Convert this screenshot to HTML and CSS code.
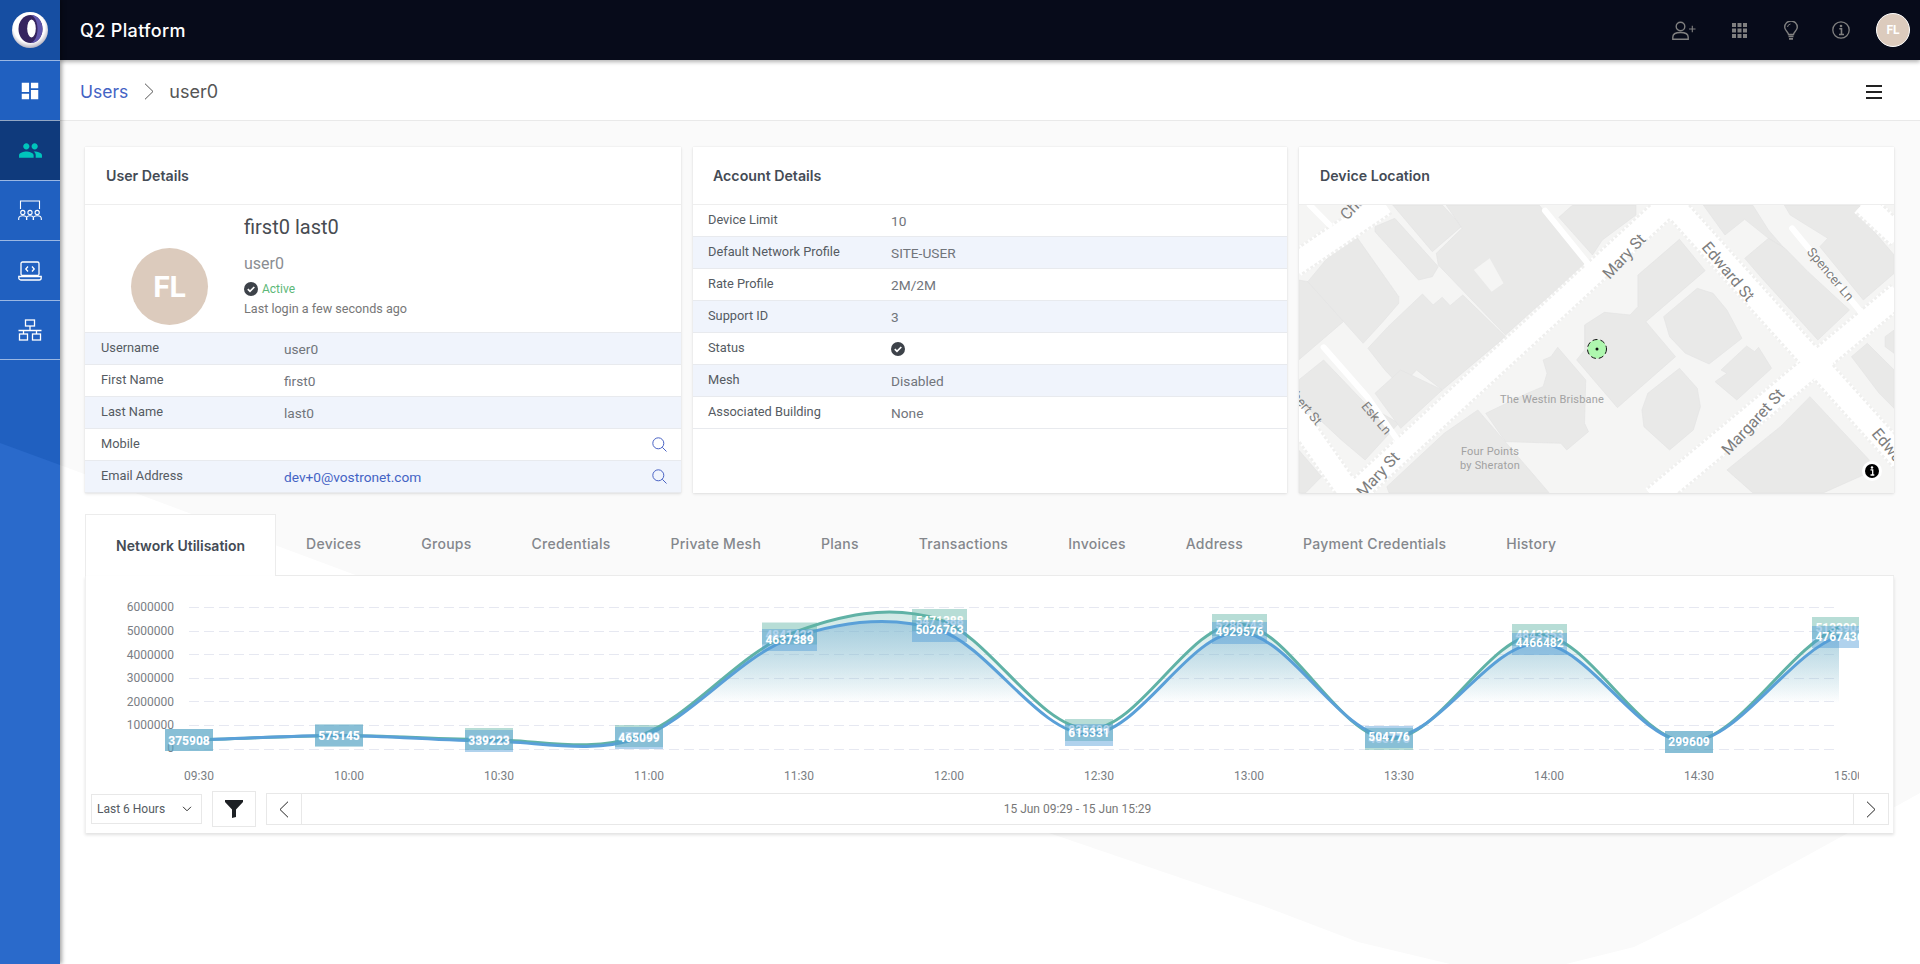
FILE: index.html
```html
<!DOCTYPE html>
<html lang="en">
<head>
<meta charset="utf-8">
<title>Q2 Platform</title>
<link rel="stylesheet" href="styles.css">
</head>
<body>
<div class="app">
  <aside class="sidebar">
    <div class="logo">
      <svg width="60" height="60" viewBox="0 0 60 60">
        <defs><radialGradient id="sphere" cx="48%" cy="42%" r="60%"><stop offset="72%" stop-color="#fff"/><stop offset="100%" stop-color="#a9a6b6"/></radialGradient></defs>
        <circle cx="30" cy="30" r="18" fill="url(#sphere)"/>
        <ellipse cx="30.500" cy="29" rx="12" ry="14" fill="#35245f"/>
        <path d="M31 15c6.500 0 11.500 6 11.500 14S37.500 43 31 43c4-2 6.500-7 6.500-14S35 17 31 15z" fill="#5f55ab"/>
        <ellipse cx="31.500" cy="28.500" rx="4.300" ry="9" fill="#fff"/>
      </svg>
    </div>
    <a class="nav-item">
      <svg width="22" height="22" viewBox="0 0 24 24" fill="#fff"><path d="M3 13h8V3H3v10zm0 8h8v-6H3v6zm10 0h8V11h-8v10zm0-18v6h8V3h-8z"/></svg>
    </a>
    <a class="nav-item nav-active">
      <svg width="25" height="25" viewBox="0 0 24 24" fill="#00c4bc"><path d="M16 11c1.660 0 2.990-1.340 2.990-3S17.660 5 16 5c-1.660 0-3 1.340-3 3s1.340 3 3 3zm-8 0c1.660 0 2.990-1.340 2.990-3S9.660 5 8 5C6.340 5 5 6.340 5 8s1.340 3 3 3zm0 2c-2.330 0-7 1.170-7 3.500V19h14v-2.500c0-2.330-4.670-3.500-7-3.500zm8 0c-.290 0-.620.020-.970.050 1.160.840 1.970 1.970 1.970 3.450V19h6v-2.500c0-2.330-4.670-3.500-7-3.500z"/></svg>
    </a>
    <a class="nav-item">
      <svg width="24" height="22" viewBox="0 0 24 22" fill="none" stroke="#fff" stroke-width="1.100"><path d="M2.500 9V1h19v8"/><circle cx="4.800" cy="12.500" r="2.100"/><circle cx="12" cy="12.500" r="2.100"/><circle cx="19.200" cy="12.500" r="2.100"/><path d="M.7 20v-1.500c0-2 2-2.800 4.100-2.800s4 .8 4 2.800V20M8.500 20v-1.500c0-2 1.600-2.800 3.500-2.800s3.500.8 3.500 2.800V20M15.200 20v-1.500c0-2 2-2.800 4-2.800s4.100.8 4.100 2.800V20"/></svg>
    </a>
    <a class="nav-item">
      <svg width="24" height="20" viewBox="0 0 24 20" fill="none" stroke="#fff" stroke-width="1.300"><rect x="3" y="1" width="18" height="13.500" rx="1.500"/><path d="M.8 15.500h22.400v1.500a2 2 0 0 1-2 2H2.800a2 2 0 0 1-2-2z"/><path d="M10 5.500 7.800 8l2.200 2.500M14 5.500 16.200 8 14 10.500"/></svg>
    </a>
    <a class="nav-item">
      <svg width="24" height="22" viewBox="0 0 24 22" fill="none" stroke="#fff" stroke-width="1.300"><rect x="7.500" y="1" width="9" height="6"/><path d="M12 7v4.500M.5 11.500h23M5.500 11.500V15M18.500 11.500V15"/><rect x="1.500" y="15" width="8" height="6"/><rect x="14.500" y="15" width="8" height="6"/></svg>
    </a>
  </aside>

  <div class="main">
    <header class="topbar">
      <div class="brand">Q2 Platform</div>
      <div class="top-actions">
        <svg class="ti-person" width="24" height="19" viewBox="0 0 24 19" fill="none" stroke="#808080" stroke-width="1.400"><circle cx="8.500" cy="5.500" r="4.300"/><path d="M.8 18.200v-2c0-3 3.200-4.700 7.700-4.700s7.700 1.700 7.700 4.700v2z"/><path d="M17 8h6.500M20.300 4.800v6.500" stroke-width="1.100"/></svg>
        <svg class="ti-grid" width="15" height="15" viewBox="0 0 15 15" fill="#808080"><rect width="4" height="4"/><rect x="5.500" width="4" height="4"/><rect x="11" width="4" height="4"/><rect y="5.500" width="4" height="4"/><rect x="5.500" y="5.500" width="4" height="4"/><rect x="11" y="5.500" width="4" height="4"/><rect y="11" width="4" height="4"/><rect x="5.500" y="11" width="4" height="4"/><rect x="11" y="11" width="4" height="4"/></svg>
        <svg class="ti-bulb" width="14" height="19" viewBox="0 0 14 19" fill="none" stroke="#808080" stroke-width="1.400"><path d="M4.500 13.500c0-2.500-3.800-3.800-3.800-7.200a6.300 6.300 0 0 1 12.600 0c0 3.400-3.800 4.700-3.800 7.200z"/><path d="M4.500 15.300h5M5 17.800h4" stroke-width="1.700"/><path d="M3.500 6a3.500 3.500 0 0 1 3-3" stroke-width="1"/></svg>
        <svg class="ti-info" width="18" height="18" viewBox="0 0 18 18" fill="none" stroke="#808080" stroke-width="1.300"><circle cx="9" cy="9" r="8.200"/><circle cx="9" cy="5" r="1.300" fill="#808080" stroke="none"/><path d="M7.300 7.800H9.500v5.500M7 13.500h5" stroke-width="1.600"/></svg>
        <div class="top-avatar">FL</div>
      </div>
    </header>

    <nav class="crumbs">
      <a class="crumb-link">Users</a>
      <svg class="crumb-sep" width="10" height="17" viewBox="0 0 10 17" fill="none" stroke="#555" stroke-width="1"><path d="M1 .7 9 8.500 1 16.300"/></svg>
      <span class="crumb-cur">user0</span>
      <div class="hamburger"><i></i><i></i><i></i></div>
    </nav>

    <main class="content">
      <section class="cards">
        <article class="card">
          <h2 class="card-title">User Details</h2>
          <div class="profile">
            <div class="avatar">FL</div>
            <div class="profile-text">
              <div class="p-name">first0 last0</div>
              <div class="p-user">user0</div>
              <div class="p-status">
                <svg width="14" height="14" viewBox="0 0 14 14"><circle cx="7" cy="7" r="7" fill="#3d4249"/><path d="M3.800 7.200 6 9.400l4.300-4.400" fill="none" stroke="#fff" stroke-width="1.700"/></svg>
                <span>Active</span>
              </div>
              <div class="p-login">Last login a few seconds ago</div>
            </div>
          </div>
          <div class="row shade"><span class="r-label">Username</span><span class="r-value">user0</span></div>
          <div class="row"><span class="r-label">First Name</span><span class="r-value">first0</span></div>
          <div class="row shade"><span class="r-label">Last Name</span><span class="r-value">last0</span></div>
          <div class="row"><span class="r-label">Mobile</span><span class="r-value"></span>
            <svg class="r-search" width="15" height="15" viewBox="0 0 15 15" fill="none" stroke="#4a63c4" stroke-width="1"><circle cx="6.300" cy="6.300" r="5.500"/><path d="m10.300 10.300 4.200 4.200"/></svg></div>
          <div class="row shade"><span class="r-label">Email Address</span><span class="r-value link">dev+0@vostronet.com</span>
            <svg class="r-search" width="15" height="15" viewBox="0 0 15 15" fill="none" stroke="#4a63c4" stroke-width="1"><circle cx="6.300" cy="6.300" r="5.500"/><path d="m10.300 10.300 4.200 4.200"/></svg></div>
        </article>

        <article class="card card-account">
          <h2 class="card-title">Account Details</h2>
          <div class="row"><span class="r-label">Device Limit</span><span class="r-value">10</span></div>
          <div class="row shade"><span class="r-label">Default Network Profile</span><span class="r-value">SITE-USER</span></div>
          <div class="row"><span class="r-label">Rate Profile</span><span class="r-value">2M/2M</span></div>
          <div class="row shade"><span class="r-label">Support ID</span><span class="r-value">3</span></div>
          <div class="row"><span class="r-label">Status</span><span class="r-value"><svg class="status-ic" width="14" height="14" viewBox="0 0 14 14"><circle cx="7" cy="7" r="7" fill="#3d4249"/><path d="M3.800 7.200 6 9.400l4.300-4.400" fill="none" stroke="#fff" stroke-width="1.700"/></svg></span></div>
          <div class="row shade"><span class="r-label">Mesh</span><span class="r-value">Disabled</span></div>
          <div class="row"><span class="r-label">Associated Building</span><span class="r-value">None</span></div>
        </article>

        <article class="card">
          <h2 class="card-title">Device Location</h2>
          <svg class="map" width="595" height="288" viewBox="1299 205 595 288">
            <rect x="1299" y="205" width="595" height="288" fill="#f5f5f4"/>
            <g transform="translate(1290 140) scale(.3954 .3333)">
              <g class="bld">
                <polygon points="22,420 45,425 135,545 22,660"/>
                <polygon points="45,425 155,268 275,470 275,490 235,545 185,610"/>
                <polygon points="215,260 265,235 375,380 360,410 325,420 215,275"/>
                <polygon points="260,195 385,195 435,258 360,335"/>
                <polygon points="370,340 435,265 395,195 630,195 750,375 620,505 545,585 375,375"/>
                <polygon points="680,232 715,195 875,195 875,225 790,300 765,345"/>
                <polygon points="197,625 248,560 335,462 362,495 385,472 405,497 437,465 545,590 385,750 320,690 280,740 240,690"/>
                <polygon points="22,720 85,660 190,790 275,850 190,960 130,900 22,780"/>
                <polygon points="215,760 280,690 385,750 280,865"/>
                <polygon points="22,930 80,1010 40,1058 22,1058"/>
                <polygon points="745,555 795,517 860,525 880,500 880,405 985,298 1050,392 900,545 975,650 828,803 725,660 745,630"/>
                <polygon points="677,622 748,720 745,850 755,875 700,930 685,910 545,905 495,820 600,760 640,740 650,700 640,660 660,650"/>
                <polygon points="945,530 1030,445 1070,460 1105,510 1143,595 1060,672 1000,640 960,590"/>
                <polygon points="985,685 1030,745 1038,800 1020,870 960,930 895,860 890,810 905,760"/>
                <polygon points="1090,690 1155,618 1175,635 1185,622 1218,685 1130,780 1075,725 1105,700"/>
                <polygon points="1045,195 1170,195 1210,270 1250,325 1210,295 1150,238 1100,285"/>
                <polygon points="1150,355 1210,295 1252,325 1310,395 1415,510 1335,600 1190,410"/>
                <polygon points="1250,195 1440,195 1445,230 1528,345 1528,400 1450,480 1340,320 1360,295 1265,225"/>
                <polygon points="1420,650 1460,610 1528,690 1528,805 1490,760"/>
                <polygon points="1505,590 1528,570 1528,640 1505,620"/>
                <polygon points="1105,990 1240,860 1315,770 1465,960 1460,1000 1350,1058 1170,1058"/>
                <polygon points="245,1040 390,880 475,810 655,1058 250,1058"/>
              </g>
              <polygon class="plaza" points="465,390 505,355 540,430 510,455"/>
              <path class="road-edge" d="M150 1075 960 190M950 170 1560 975M920 1075 1540 462M10 375 240 190M-20 770 150 1058M1450 190 1540 290"/>
              <path class="road-dots" d="M150 1075 960 190M950 170 1560 975M920 1075 1540 462M10 375 240 190M-20 770 150 1058M1450 190 1540 290"/>
              <path class="road" d="M150 1075 960 190M950 170 1560 975M920 1075 1540 462M10 375 240 190M-20 770 150 1058M1450 190 1540 290"/>
              <path class="lane" d="M85 622 195 770 275 905M645 212 770 395M1270 265 1450 525M50 195 100 255"/>
            </g>
            <text class="m-road" transform="translate(1628 260) rotate(-47)">Mary St</text>
            <text class="m-road" transform="translate(1724 275) rotate(50)">Edward St</text>
            <text class="m-road small" transform="translate(1827 277) rotate(50)">Spencer Ln</text>
            <text class="m-road" transform="translate(1757 425.500) rotate(-47)">Margaret St</text>
            <text class="m-road" transform="translate(1382 478) rotate(-47)">Mary St</text>
            <text class="m-road small" transform="translate(1373 421) rotate(50)">Esk Ln</text>
            <text class="m-road anchor-start" transform="translate(1871 434) rotate(50)">Edward St</text>
            <text class="m-road small anchor-end" transform="translate(1316 426) rotate(50)">Albert St</text>
            <text class="m-road anchor-start" transform="translate(1347 221) rotate(-47)">Charlotte St</text>
            <text class="m-poi" x="1552" y="403">The Westin Brisbane</text>
            <text class="m-poi" x="1490" y="455">Four Points</text>
            <text class="m-poi" x="1490" y="469">by Sheraton</text>
            <circle class="m-pin" cx="1597" cy="349" r="9.500"/>
            <circle cx="1597" cy="349" r="1.500" fill="#111"/>
            <circle cx="1872" cy="471" r="10" fill="#fff"/>
            <circle cx="1872" cy="471" r="7" fill="#000"/>
            <circle cx="1872" cy="467.500" r="1.200" fill="#fff"/>
            <path d="M1870.500 469.800h2.200v5M1870.500 475h3.800" stroke="#fff" stroke-width="1.300" fill="none"/>
          </svg>
        </article>
      </section>

      <section class="panel">
        <div class="tabs">
          <a class="tab tab-active">Network Utilisation</a>
          <a class="tab">Devices</a>
          <a class="tab">Groups</a>
          <a class="tab">Credentials</a>
          <a class="tab">Private Mesh</a>
          <a class="tab">Plans</a>
          <a class="tab">Transactions</a>
          <a class="tab">Invoices</a>
          <a class="tab">Address</a>
          <a class="tab">Payment Credentials</a>
          <a class="tab">History</a>
        </div>
        <div class="panel-body">
          <svg class="chart" width="1773" height="215" viewBox="86 577 1773 215">
            <defs>
              <linearGradient id="areaB" gradientUnits="userSpaceOnUse" x1="0" y1="622" x2="0" y2="704"><stop offset="0" stop-color="#7db4d6" stop-opacity=".55"/><stop offset="1" stop-color="#7db4d6" stop-opacity="0"/></linearGradient>
              <linearGradient id="areaG" gradientUnits="userSpaceOnUse" x1="0" y1="612" x2="0" y2="704"><stop offset="0" stop-color="#60b2a6" stop-opacity=".3"/><stop offset="1" stop-color="#60b2a6" stop-opacity="0"/></linearGradient>
            </defs>
            <g class="grid">
              <path d="M189 608.500H1839M189 632.500H1839M189 655.500H1839M189 679.500H1839M189 702.500H1839M189 726.500H1839M189 750.500H1839"/>
            </g>
            <g class="y-axis">
              <text x="174" y="612">6000000</text>
              <text x="174" y="636">5000000</text>
              <text x="174" y="660">4000000</text>
              <text x="174" y="683">3000000</text>
              <text x="174" y="707">2000000</text>
              <text x="174" y="730">1000000</text>
              <text x="174" y="753">0</text>
            </g>
            <g class="x-axis">
              <text x="199" y="781">09:30</text><text x="349" y="781">10:00</text><text x="499" y="781">10:30</text><text x="649" y="781">11:00</text><text x="799" y="781">11:30</text><text x="949" y="781">12:00</text><text x="1099" y="781">12:30</text><text x="1249" y="781">13:00</text><text x="1399" y="781">13:30</text><text x="1549" y="781">14:00</text><text x="1699" y="781">14:30</text><text x="1849" y="781">15:00</text>
            </g>
            <path fill="url(#areaG)" d="M189 741.100C239 740.300,289 736.500,339 736.400C389 736.300,439 740.400,489 740.500C539 740.600,589 754.520,639 737C689 719.480,739 654.820,789 635.400C839 615.980,889 604.720,939 620.500C989 636.280,1039 729.370,1089 730.100C1139 730.830,1189 623.250,1239 624.900C1289 626.550,1339 738.250,1389 740C1439 741.750,1489 634.920,1539 635.400C1589 635.880,1639 744.050,1689 742.900C1739 741.750,1789 647.500,1839 628.500V750H189Z"/>
            <path fill="url(#areaB)" d="M189 741.100C239 740.300,289 736.250,339 736.400C389 736.550,439 741.570,489 742C539 742.430,589 755.970,639 739C689 722.030,739 658.200,789 640.200C839 622.200,889 615.130,939 631C989 646.870,1039 735.020,1089 735.400C1139 735.780,1189 632.850,1239 633.300C1289 633.750,1339 736.270,1389 738.100C1439 739.930,1489 643.500,1539 644.300C1589 645.100,1639 744.080,1689 742.900C1739 741.720,1789 654,1839 637.200V750H189Z"/>
            <path class="line-g" d="M189 741.100C239 740.300,289 736.500,339 736.400C389 736.300,439 740.400,489 740.500C539 740.600,589 754.520,639 737C689 719.480,739 654.820,789 635.400C839 615.980,889 604.720,939 620.500C989 636.280,1039 729.370,1089 730.100C1139 730.830,1189 623.250,1239 624.900C1289 626.550,1339 738.250,1389 740C1439 741.750,1489 634.920,1539 635.400C1589 635.880,1639 744.050,1689 742.900C1739 741.750,1789 647.500,1839 628.500"/>
            <path class="line-b" d="M189 741.100C239 740.300,289 736.250,339 736.400C389 736.550,439 741.570,489 742C539 742.430,589 755.970,639 739C689 722.030,739 658.200,789 640.200C839 622.200,889 615.130,939 631C989 646.870,1039 735.020,1089 735.400C1139 735.780,1189 632.850,1239 633.300C1289 633.750,1339 736.270,1389 738.100C1439 739.930,1489 643.500,1539 644.300C1589 645.100,1639 744.080,1689 742.900C1739 741.720,1789 654,1839 637.200"/>
            <g class="labels-g">
              <rect x="165" y="730" width="48" height="22"/><text x="189" y="745.500">375908</text>
              <rect x="315" y="725.500" width="48" height="22"/><text x="339" y="740.500">575145</text>
              <rect x="465" y="729" width="48" height="22"/><text x="489" y="744.500">389223</text>
              <rect x="615" y="726" width="48" height="22"/><text x="639" y="741.500">477089</text>
              <rect x="762" y="623.500" width="55" height="22"/><text x="789.500" y="639.500">4841422</text>
              <rect x="912" y="610" width="55" height="22"/><text x="939.500" y="625.500">5471388</text>
              <rect x="1065" y="720" width="48" height="22"/><text x="1089" y="735">839490</text>
              <rect x="1212" y="615" width="55" height="22"/><text x="1239.500" y="630">5286743</text>
              <rect x="1365" y="729" width="48" height="22"/><text x="1389" y="744">455776</text>
              <rect x="1512" y="625" width="55" height="22"/><text x="1539.500" y="640">4843353</text>
              <rect x="1665" y="732" width="48" height="22"/><text x="1689" y="747">299609</text>
              <rect x="1812" y="618" width="55" height="22"/><text x="1839.500" y="633">5133904</text>
            </g>
            <g class="labels-b">
              <rect x="165" y="730" width="48" height="22"/><text x="189" y="745.500">375908</text>
              <rect x="315" y="725.500" width="48" height="22"/><text x="339" y="740.500">575145</text>
              <rect x="465" y="731" width="48" height="22"/><text x="489" y="746">339223</text>
              <rect x="615" y="728" width="48" height="22"/><text x="639" y="743">465099</text>
              <rect x="762" y="630" width="55" height="22"/><text x="789.500" y="644.500">4637389</text>
              <rect x="912" y="621" width="55" height="22"/><text x="939.500" y="635">5026763</text>
              <rect x="1065" y="725" width="48" height="22"/><text x="1089" y="738">615331</text>
              <rect x="1212" y="623" width="55" height="22"/><text x="1239.500" y="637">4929576</text>
              <rect x="1365" y="727" width="48" height="22"/><text x="1389" y="741.500">504776</text>
              <rect x="1512" y="634" width="55" height="22"/><text x="1539.500" y="648">4466482</text>
              <rect x="1665" y="732" width="48" height="22"/><text x="1689" y="747">299609</text>
              <rect x="1812" y="627" width="55" height="22"/><text x="1839.500" y="641.500">4767436</text>
            </g>
          </svg>
          <div class="chart-ctrl">
            <div class="range">
              <span>Last 6 Hours</span>
              <svg width="10" height="6" viewBox="0 0 10 6" fill="none" stroke="#333" stroke-width="1"><path d="m1 .8 4 4 4-4"/></svg>
            </div>
            <button class="filter" type="button">
              <svg width="18" height="18" viewBox="0 0 18 18" fill="#1d2024"><path d="M0 0h18v2L11 9.500V17l-4 1V9.500L0 2z"/></svg>
            </button>
            <div class="pager">
              <span class="pg-btn pg-prev"><svg width="10" height="17" viewBox="0 0 10 17" fill="none" stroke="#222" stroke-width="1"><path d="M9 .7 1 8.500 9 16.300"/></svg></span>
              <span class="pg-range">15 Jun 09:29 - 15 Jun 15:29</span>
              <span class="pg-btn pg-next"><svg width="10" height="17" viewBox="0 0 10 17" fill="none" stroke="#222" stroke-width="1"><path d="M1 .7 9 8.500 1 16.300"/></svg></span>
            </div>
          </div>
        </div>
      </section>
    </main>
  </div>
</div>
</body>
</html>
```
FILE: styles.css
```css
* { box-sizing: border-box; }
html, body { margin: 0; height: 964px; overflow: hidden; }
body { font-family: Roboto, "Liberation Sans", sans-serif; color: #555; background: #fafafa; }
a { text-decoration: none; }

.app { display: grid; grid-template-columns: 60px 1fr; height: 964px; position: relative; }

/* sidebar */
.sidebar { position: relative; z-index: 3; background: #2060c0; box-shadow: 2px 0 4px rgba(0,0,0,.35); display: flex; flex-direction: column; }
.sidebar::before { content: ""; position: absolute; inset: 0; background: #2a6acb; clip-path: polygon(0 443px, 60px 465px, 60px 964px, 0 964px); }
.logo { position: relative; height: 60px; background: #164ea2; }
.logo svg { display: block; }
.nav-item { position: relative; height: 60px; display: flex; align-items: center; justify-content: center; border-top: 1px solid rgba(255,255,255,.55); }
.nav-item:last-child { border-bottom: 1px solid rgba(255,255,255,.55); }
.nav-active { background: #0f3a7c; }

/* main */
.main { position: relative; display: flex; flex-direction: column; min-width: 0; }
.main::before { content: ""; position: absolute; inset: 0; background: #fff; clip-path: polygon(0 465px, 989px 833px, 1206px 907px, 1298px 942px, 1390px 964px, 0 964px); }
.main::after { content: ""; position: absolute; inset: 0; background: #fff; clip-path: polygon(1506px 964px, 1574px 947px, 1635px 917px, 1788px 833px, 1860px 793px, 1860px 964px); }

.topbar { position: relative; z-index: 2; height: 60px; flex: none; background: #070b1a; box-shadow: 0 2px 4px rgba(0,0,0,.3); display: flex; align-items: center; padding: 0 10px 0 20px; }
.brand { font-family: Inter, "Noto Sans", sans-serif; font-weight: 500; font-size: 18px; color: #fff; letter-spacing: .35px; }
.top-actions { margin-left: auto; display: flex; align-items: center; }
.ti-person { margin-right: 36px; }
.ti-grid { margin-right: 37px; }
.ti-bulb { margin-right: 34px; }
.ti-info { margin-right: 26px; }
.top-avatar { width: 34px; height: 34px; border-radius: 50%; background: #dccbbd; border: 1px solid #fff; color: #fff; font-weight: 700; font-size: 12px; display: flex; align-items: center; justify-content: center; }

.crumbs { position: relative; z-index: 1; height: 61px; flex: none; background: #fff; border-bottom: 1px solid #e9e9e9; display: flex; align-items: center; padding: 3px 38px 0 20px; }
.crumb-link { font-family: Inter, sans-serif; font-size: 17.500px; color: #4463c4; }
.crumb-sep { margin: 0 15px 0 16px; }
.crumb-cur { font-family: Inter, sans-serif; font-size: 18px; color: #555; }
.hamburger { margin-left: auto; width: 16px; display: flex; flex-direction: column; gap: 4px; }
.hamburger i { display: block; height: 2px; background: #222; }

.content { position: relative; z-index: 1; padding: 26px 26px 0 25px; flex: 1; }
.cards { display: grid; grid-template-columns: 596px 594px 595px; gap: 12px; height: 346px; }
.card { background: #fff; box-shadow: 0 0 1px rgba(0,0,0,.1), 0 1px 3px rgba(0,0,0,.1); display: flex; flex-direction: column; overflow: hidden; }
.card-title { margin: 0; height: 58px; flex: none; border-bottom: 1px solid #eee; padding: 0 0 0 21px; display: flex; align-items: center; font-family: Inter, sans-serif; font-size: 14.200px; font-weight: 600; color: #444b55; }
.card-account .card-title { padding-left: 20px; }

.profile { height: 128px; flex: none; display: flex; padding-left: 46px; border-bottom: 1px solid #e8eaee; }
.avatar { width: 77px; height: 77px; margin-top: 43px; border-radius: 50%; background: #dccbbd; color: #fff; font-size: 30px; font-weight: 700; display: flex; align-items: center; justify-content: center; flex: none; }
.profile-text { margin-left: 36px; padding-top: 10px; }
.p-name { font-size: 20px; line-height: 24px; color: #484c52; }
.p-user { font-size: 16px; line-height: 24px; margin-top: 13px; color: #8a8d92; }
.p-status { display: flex; align-items: center; gap: 4px; height: 18px; margin-top: 4px; font-size: 12px; color: #5cb878; }
.p-login { font-size: 12.600px; line-height: 18px; margin-top: 2px; color: #777; }

.row { height: 32px; flex: none; display: grid; grid-template-columns: 183px 1fr auto; align-items: center; padding: 0 14px 0 16px; border-bottom: 1px solid #e8eaee; }
.card-account .row { padding-left: 15px; }
.shade { background: #f0f4fc; }
.r-label { font-size: 12.800px; color: #555b62; position: relative; top: -1px; }
.r-value { font-size: 13.700px; color: #71757b; }
.r-value.link { color: #4463c4; }
.status-ic { display: block; }

/* map */
.map { display: block; flex: none; }
.bld polygon { fill: #e9e9e8; stroke: #e2e2e2; stroke-width: .6; vector-effect: non-scaling-stroke; }
.plaza { fill: #f5f5f4; }
.road-edge, .road-dots, .road, .lane { fill: none; vector-effect: non-scaling-stroke; }
.road-edge { stroke: #f0f0ef; stroke-width: 26; }
.road-dots { stroke: #fff; stroke-width: 26; stroke-dasharray: 2 3; }
.road { stroke: #fff; stroke-width: 21; }
.lane { stroke: #fff; stroke-width: 6; stroke-linecap: round; stroke-linejoin: round; }
.m-road { font-family: Roboto, sans-serif; font-size: 16px; fill: #7d7d7d; text-anchor: middle; }
.m-road.small { font-size: 13px; }
.m-road.anchor-start { text-anchor: start; }
.m-road.anchor-end { text-anchor: end; }
.m-poi { font-family: Roboto, sans-serif; font-size: 11px; fill: #a2a2a2; text-anchor: middle; letter-spacing: .2px; }
.m-pin { fill: #aef7ae; stroke: #111; stroke-width: 1; stroke-dasharray: 5 3; }

/* panel */
.panel { margin-top: 21px; height: 319px; display: flex; flex-direction: column; }
.tabs { display: flex; height: 62px; flex: none; border-bottom: 1px solid #ececec; }
.tab { height: 61px; padding: 0 30px 2px; display: flex; align-items: center; font-family: Inter, sans-serif; font-size: 14px; font-weight: 500; color: #84878c; letter-spacing: .25px; }
.tab-active { height: 62px; background: #fff; border: 1px solid #ececec; border-bottom: 0; color: #444b55; padding: 0 30px; font-weight: 600; letter-spacing: 0; }
.panel-body { flex: 1; background: #fff; border: solid #f0f0f0; border-width: 0 1px; box-shadow: 0 2px 3px rgba(0,0,0,.12); display: flex; flex-direction: column; }
.chart { display: block; flex: none; }
.grid path { stroke: #e6e8f1; stroke-width: 1; stroke-dasharray: 10 5; fill: none; }
.y-axis text { font-size: 12px; fill: #7a7e84; text-anchor: end; }
.x-axis text { font-size: 12px; fill: #7a7e84; text-anchor: middle; }
.line-g, .line-b { fill: none; stroke-width: 3; }
.line-g { stroke: #60b2a6; }
.line-b { stroke: #5aa0d8; }
.labels-g rect { fill: rgba(95,180,165,.45); }
.labels-b rect { fill: rgba(80,155,215,.45); }
.labels-g text, .labels-b text { font-size: 12px; font-weight: 700; fill: #fff; text-anchor: middle; }

.chart-ctrl { display: flex; align-items: center; padding: 0 4px 0 5px; height: 36px; flex: none; }
.range { width: 111px; height: 30px; background: #fff; border: 1px solid #e8e8e8; display: flex; align-items: center; justify-content: space-between; padding: 0 9px 0 5px; font-size: 12px; color: #555b62; }
.filter { width: 44px; height: 36px; margin-left: 10px; padding: 0; background: #fff; border: 1px solid #e8e8e8; display: flex; align-items: center; justify-content: center; }
.pager { flex: 1; height: 32px; margin-left: 10px; border: 1px solid #e8e8e8; display: flex; align-items: stretch; }
.pg-btn { width: 35px; flex: none; display: flex; align-items: center; justify-content: center; }
.pg-prev { border-right: 1px solid #e8e8e8; }
.pg-next { border-left: 1px solid #e8e8e8; }
.pg-range { flex: 1; display: flex; align-items: center; justify-content: center; font-size: 12px; color: #777; }
```
